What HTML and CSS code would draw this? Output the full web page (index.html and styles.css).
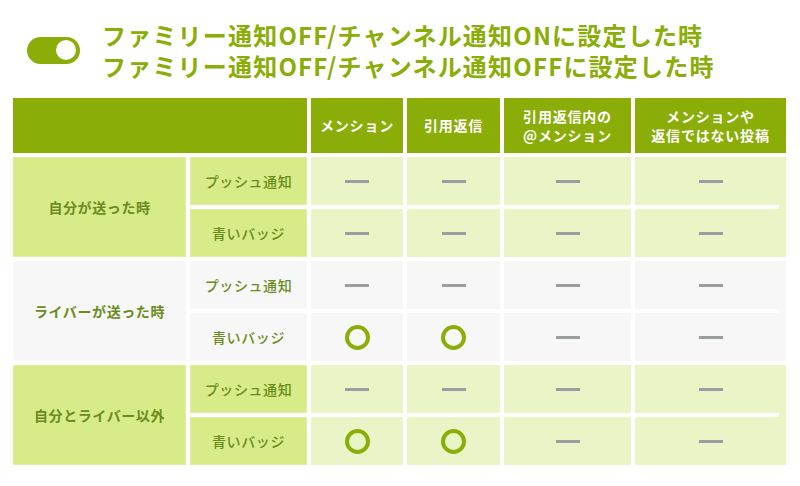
FILE: index.html
```html
<!DOCTYPE html>
<html lang="ja">
<head>
<meta charset="utf-8">
<link rel="stylesheet" href="styles.css">
</head>
<body>
<div class="page">
  <div class="title-row">
    <div class="toggle"><span class="knob"></span></div>
    <div class="title">
      <div>ファミリー通知OFF/チャンネル通知ONに設定した時</div>
      <div>ファミリー通知OFF/チャンネル通知OFFに設定した時</div>
    </div>
  </div>

  <div class="table">
    <div class="th th-blank"></div>
    <div class="th">メンション</div>
    <div class="th">引用返信</div>
    <div class="th">引用返信内の<br>@メンション</div>
    <div class="th">メンションや<br>返信ではない投稿</div>

    <!-- group 1 -->
    <div class="group-label g-green r1">自分が送った時</div>
    <div class="sub g-green r1a">プッシュ通知</div>
    <div class="cell d-green r1a"><span class="dash"></span></div>
    <div class="cell d-green r1a"><span class="dash"></span></div>
    <div class="cell d-green r1a"><span class="dash"></span></div>
    <div class="last d-green r1">
      <div class="last-cell"><span class="dash"></span></div>
      <div class="sep"></div>
      <div class="last-cell"><span class="dash"></span></div>
    </div>
    <div class="sub g-green r1b">青いバッジ</div>
    <div class="cell d-green r1b"><span class="dash"></span></div>
    <div class="cell d-green r1b"><span class="dash"></span></div>
    <div class="cell d-green r1b"><span class="dash"></span></div>

    <!-- group 2 -->
    <div class="group-label g-gray r2">ライバーが送った時</div>
    <div class="sub g-gray r2a">プッシュ通知</div>
    <div class="cell d-gray r2a"><span class="dash"></span></div>
    <div class="cell d-gray r2a"><span class="dash"></span></div>
    <div class="cell d-gray r2a"><span class="dash"></span></div>
    <div class="last d-gray r2">
      <div class="last-cell"><span class="dash"></span></div>
      <div class="sep"></div>
      <div class="last-cell"><span class="dash"></span></div>
    </div>
    <div class="sub g-gray r2b">青いバッジ</div>
    <div class="cell d-gray r2b"><span class="ring"></span></div>
    <div class="cell d-gray r2b"><span class="ring"></span></div>
    <div class="cell d-gray r2b"><span class="dash"></span></div>

    <!-- group 3 -->
    <div class="group-label g-green r3">自分とライバー以外</div>
    <div class="sub g-green r3a">プッシュ通知</div>
    <div class="cell d-green r3a"><span class="dash"></span></div>
    <div class="cell d-green r3a"><span class="dash"></span></div>
    <div class="cell d-green r3a"><span class="dash"></span></div>
    <div class="last d-green r3">
      <div class="last-cell"><span class="dash"></span></div>
      <div class="sep"></div>
      <div class="last-cell"><span class="dash"></span></div>
    </div>
    <div class="sub g-green r3b">青いバッジ</div>
    <div class="cell d-green r3b"><span class="ring"></span></div>
    <div class="cell d-green r3b"><span class="ring"></span></div>
    <div class="cell d-green r3b"><span class="dash"></span></div>
  </div>
</div>
</body>
</html>
```

FILE: styles.css
```css
html, body {
  margin: 0;
  padding: 0;
  background: #ffffff;
}

body {
  font-family: "Noto Sans CJK JP", "Noto Sans", sans-serif;
}

.page {
  width: 800px;
  height: 486px;
  padding: 19px 0 0 13px;
  box-sizing: border-box;
}

.title-row {
  display: flex;
  align-items: center;
  height: 62px;
  margin-bottom: 17px;
}

.toggle {
  width: 53px;
  height: 27px;
  border-radius: 14px;
  background: #8aad07;
  margin-left: 14px;
  margin-right: 22px;
  display: flex;
  align-items: center;
  justify-content: flex-end;
  padding-right: 4px;
  box-sizing: border-box;
}

.knob {
  width: 20px;
  height: 20px;
  border-radius: 50%;
  background: #ffffff;
}

.title {
  color: #8aad07;
  font-weight: 700;
  font-size: 24px;
  line-height: 31px;
  letter-spacing: 1.2px;
}

.table {
  display: grid;
  grid-template-columns: 173px 117px 92px 93px 127px 151px;
  grid-template-rows: 55px 48px 48px 48px 48px 48px 48px;
  gap: 4px;
}

.th {
  background: #8aad07;
  color: #ffffff;
  font-weight: 700;
  font-size: 14px;
  line-height: 19px;
  letter-spacing: 0.8px;
  display: flex;
  align-items: center;
  justify-content: center;
  text-align: center;
}

.th-blank {
  grid-column: 1 / 3;
}

.group-label,
.sub {
  color: #6b8c1c;
  font-size: 14px;
  display: flex;
  align-items: center;
  justify-content: center;
  letter-spacing: 0.6px;
  box-sizing: border-box;
  border: 1px dotted rgba(255, 255, 255, 0.35);
}

.group-label {
  grid-column: 1;
  font-weight: 700;
}

.sub {
  grid-column: 2;
  font-weight: 500;
}

.r1 { grid-row: 2 / 4; }
.r2 { grid-row: 4 / 6; }
.r3 { grid-row: 6 / 8; }
.r1a { grid-row: 2; }
.r1b { grid-row: 3; }
.r2a { grid-row: 4; }
.r2b { grid-row: 5; }
.r3a { grid-row: 6; }
.r3b { grid-row: 7; }

.g-green { background: #d7eb88; }
.g-gray { background: #f7f7f7; }
.d-green { background: #e9f5c6; }
.d-gray { background: #f7f7f7; }

.cell {
  display: flex;
  align-items: center;
  justify-content: center;
}

.last {
  grid-column: 6;
  display: flex;
  flex-direction: column;
}

.last-cell {
  flex: 1;
  display: flex;
  align-items: center;
  justify-content: center;
}

.sep {
  height: 4px;
  margin-right: 7px;
  background: #ffffff;
}

.dash {
  width: 24px;
  height: 3px;
  background: #9a9e9f;
}

.ring {
  width: 25px;
  height: 25px;
  border-radius: 50%;
  border: 4px solid #8aad07;
  box-sizing: border-box;
}
```
